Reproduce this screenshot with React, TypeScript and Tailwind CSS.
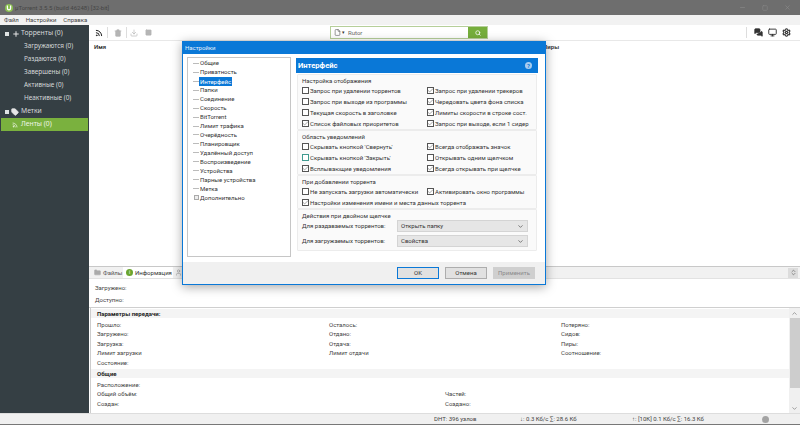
import React from "react";
import { Rss, Trash2, Download, Square, Search, File, Check, ChevronDown, MessagesSquare, Monitor, Settings, Tag, Plus, Folder, Minus, X, User, ChevronUp, ChevronsUpDown } from "lucide-react";

function Cb({ label, on, teal }: { label: string; on?: boolean; teal?: boolean }) {
  return (
    <div className="flex items-center gap-[1.5px] h-[11px] whitespace-nowrap">
      <span className={`w-[6.5px] h-[6.5px] border-[0.75px] ${teal ? "border-[#3f9a8f]" : "border-[#555]"} bg-white flex items-center justify-center shrink-0`}>
        {on && <Check size={7} strokeWidth={1.5} className="text-[#333] shrink-0" />}
      </span>
      <span className="text-[6px] leading-none text-[#333]">{label}</span>
    </div>
  );
}

function Group({ title, children }: { title: string; children: React.ReactNode }) {
  return (
    <div className="border border-[#ececec] rounded-[1px] pl-[4px] pr-[3px] pt-[1px] bg-[#fafafa]">
      <div className="text-[6px] leading-[9px] text-[#333]">{title}</div>
      {children}
    </div>
  );
}

function Row2({ a, b, aOn, bOn, teal }: { a: string; b: string; aOn?: boolean; bOn?: boolean; teal?: boolean }) {
  return (
    <div className="grid grid-cols-[125px_1fr]">
      <Cb label={a} on={aOn} teal={teal} />
      <Cb label={b} on={bOn} />
    </div>
  );
}

const tree = ["Общие","Приватность","Интерфейс","Папки","Соединение","Скорость","BitTorrent","Лимит трафика","Очерёдность","Планировщик","Удалённый доступ","Воспроизведение","Устройства","Парные устройства","Метка","Дополнительно"];

export default function App() {
  return (
    <div className="font-['Roboto','Noto_Sans',sans-serif] relative w-[800px] h-[425px] overflow-hidden bg-white flex flex-col text-[#333]">
      {/* title bar */}
      <div className="h-[15px] bg-[#6e6e6e] flex items-center pl-[5px] shrink-0">
        <svg width="8" height="8" viewBox="0 0 10 10"><circle cx="5" cy="5" r="5" fill="#8cc152"/><path d="M3 2v3.4a2 2 0 0 0 4 0V2" stroke="#fff" strokeWidth="1.5" fill="none"/></svg>
        <span className="ml-[2px] text-[6px] text-[#454545]">µTorrent 3.5.5 (build 46248) [32-bit]</span>
        <div className="ml-auto flex items-center gap-[16px] pr-[9px] text-[#8c8c8c]">
          <Minus size={7} />
          <Square size={6} />
          <X size={7} />
        </div>
      </div>
      {/* menu */}
      <div className="h-[10px] bg-[#f2f2f2] flex items-center pl-[4px] gap-[7px] text-[6px] leading-none text-[#444] shrink-0">
        <span>Файл</span><span>Настройки</span><span>Справка</span>
      </div>
      <div className="flex flex-1 min-h-0">
        {/* sidebar */}
        <aside className="w-[89px] bg-[#353f44] shrink-0 pt-[2px] text-[#d5d9da] text-[6.4px] leading-none font-['Noto_Sans',sans-serif]">
          <div className="h-[13px] flex items-center pl-[5px] text-[6.8px]">
            <span className="w-[4px] h-[4px] bg-[#dfe3e4]" />
            <Plus size={8} strokeWidth={3} className="text-[#e6e6e6] ml-[3px]" />
            <span className="ml-[1px]">Торренты (0)</span>
          </div>
          {["Загружаются (0)","Раздаются (0)","Завершены (0)","Активные (0)","Неактивные (0)"].map((t) => (
            <div key={t} className="h-[13px] flex items-center pl-[24px]">{t}</div>
          ))}
          <div className="h-[13px] flex items-center pl-[5px] text-[6.8px]">
            <span className="w-[4px] h-[4px] bg-[#dfe3e4]" />
            <Tag size={8} fill="#e6e6e6" className="text-[#e6e6e6] ml-[2px]" />
            <span className="ml-[2px]">Метки</span>
          </div>
          <div className="h-[13px] ml-[1px] mr-[1px] flex items-center pl-[11px] gap-[3px] bg-[#7ab13e] text-[#eef5e6] text-[6.8px]">
            <Rss size={6} strokeWidth={3} />
            <span>Ленты (0)</span>
          </div>
        </aside>
        <main className="flex-1 min-w-0 flex flex-col">
          {/* toolbar */}
          <div className="h-[16px] shrink-0 flex items-center pl-[6px] pr-[9px] bg-white border-b border-[#e8e8e8]">
            <Rss size={8} strokeWidth={3} className="text-[#222]" />
            <span className="w-px h-[11px] bg-[#ddd] ml-[4px] mr-[6px]" />
            <Trash2 size={8} className="text-[#b5b5b5]" fill="#b5b5b5" />
            <span className="w-px h-[11px] bg-[#ddd] ml-[4px] mr-[3px]" />
            <Download size={8} className="text-[#b5b5b5]" />
            <Square size={7} fill="#b5b5b5" className="text-[#b5b5b5] ml-[7px]" />
            <div className="ml-[178px] w-[158px] h-[13px] flex items-stretch border border-[#b6cf9a]">
              <div className="flex-1 flex items-center pl-[3px] gap-[1px] bg-white">
                <File size={7} className="text-[#555]" />
                <span className="text-[5px] leading-none">▾</span>
                <span className="ml-[2px] text-[6px] text-[#666]">Rutor</span>
              </div>
              <div className="w-[19px] bg-[#76ae3c] flex items-center justify-center">
                <Search size={6} strokeWidth={3} className="text-white" />
              </div>
            </div>
            <div className="ml-auto flex items-center gap-[5px]">
              <span className="w-px h-[11px] bg-[#ddd] mr-[2px]" />
              <MessagesSquare size={9} fill="#333" className="text-[#333]" />
              <Monitor size={9} strokeWidth={2.5} className="text-[#333]" />
              <Settings size={9} strokeWidth={3} className="text-[#333]" />
            </div>
          </div>
          {/* list */}
          <div className="h-[226px] shrink-0 bg-white pl-[5px] pt-[1px] text-[6px] font-semibold text-[#333] border-b border-[#c8c8c8] flex">
            <span>Имя</span>
            <span className="ml-[437px]">Пиры</span>
          </div>
          {/* tabs */}
          <div className="h-[12px] shrink-0 flex items-stretch bg-[#f1f1f1] border-b border-[#e2e2e2] pl-[4px] text-[6px] leading-none">
            <div className="w-[30px] flex items-center gap-[2px] pl-[1px] text-[#555]"><Folder size={7} fill="#aaa" className="text-[#aaa]" />Файлы</div>
            <div className="w-[50px] pl-[3px] flex items-center gap-[2px] bg-white text-[#333]">
              <span className="w-[7px] h-[7px] rounded-full bg-[#6aa52f] text-white text-[5px] flex items-center justify-center">i</span>Информация
            </div>
            <User size={7} className="text-[#999] ml-[2px] self-center" />
            <div className="ml-auto mr-[2px] self-center w-[10px] h-[10px] bg-[#dcdcdc] flex items-center justify-center text-[#555]">
              <ChevronsUpDown size={7} />
            </div>
          </div>
          {/* availability */}
          <div className="h-[29px] shrink-0 pl-[6px] text-[6px] text-[#444] flex flex-col border-b border-[#cfcfcf]">
            <div className="h-[12px] mt-[3px] leading-[12px]">Загружено:</div>
            <div className="h-[12px] leading-[12px]">Доступно:</div>
          </div>
          {/* details */}
          <div className="flex-1 min-h-0 border-l border-[#ccc] ml-[1px] flex text-[6px] text-[#444]">
            <div className="flex-1 min-w-0">
              <div className="h-[9px] bg-[#f4f4f4] pl-[6px] leading-[9px] font-bold text-[#222] mt-[1px]">Параметры передачи:</div>
              <div className="grid grid-cols-[232px_232px_1fr] pl-[6px] pt-[2px]">
                {[
                  ["Прошло:","Осталось:","Потеряно:"],
                  ["Загружено:","Отдано:","Сидов:"],
                  ["Загрузка:","Отдача:","Пиры:"],
                  ["Лимит загрузки","Лимит отдачи","Соотношение:"],
                  ["Состояние:","",""],
                ].flat().map((t, i) => <div key={i} className="h-[9.4px] leading-[9.4px] whitespace-nowrap">{t}</div>)}
              </div>
              <div className="h-[9px] bg-[#f4f4f4] pl-[6px] leading-[9px] font-bold text-[#222] mt-[2px]">Общие</div>
              <div className="grid grid-cols-[348px_1fr] pl-[6px] pt-[2px]">
                {[["Расположение:",""],["Общий объём:","Частей:"],["Создан:","Создано:"]].flat().map((t, i) => <div key={i} className="h-[9.4px] leading-[9.4px] whitespace-nowrap">{t}</div>)}
              </div>
            </div>
            <div className="w-[11px] shrink-0 bg-[#f0f0f0] flex flex-col items-center text-[#666]">
              <ChevronUp size={7} className="mt-[2px]" />
              <div className="w-[10px] h-[70px] bg-[#cdcdcd] mt-[1px]" />
              <ChevronDown size={7} className="mt-auto mb-[1px]" />
            </div>
          </div>
        </main>
      </div>
      {/* status */}
      <div className="h-[12px] shrink-0 bg-[#f0f0f0] border-t border-[#ddd] border-b-[#777] border-b flex items-center text-[6px] leading-none text-[#444] whitespace-nowrap">
        <span className="ml-[434px] w-[86px]">DHT: 396 узлов</span>
        <span className="w-[112px]">↓: 0.3 Кб/с ∑: 28.6 Кб</span>
        <span className="w-[130px]">↑: [10К] 0.1 Кб/с ∑: 16.3 Кб</span>
        <span className="w-[7px] h-[7px] rounded-full bg-[#a3a3a3]" />
      </div>

      {/* dialog */}
      <div className="absolute left-[182px] top-[41px] w-[364px] h-[244px] bg-[#f0f0f0] border border-[#0a78d7] shadow-[0_2px_10px_rgba(0,0,0,0.35)] flex flex-col">
        <div className="h-[12px] shrink-0 bg-[#0a78d7] text-[#e6f1fb] text-[6px] leading-[12px] pl-[2px]">Настройки</div>
        <div className="h-[208px] shrink-0 flex bg-white pt-[3px] pl-[4px] pr-[7px]">
          <div className="w-[104px] h-[200px] shrink-0 border border-[#c6c6c6] bg-white pt-[1px] pl-[5px] text-[6px] text-[#333]">
            {tree.map((t) => (
              <div key={t} className="h-[8.95px] flex items-center whitespace-nowrap">
                {t === "Дополнительно"
                  ? <span className="w-[5px] h-[5px] border-[0.75px] border-[#aaa] bg-[#eee] ml-[1px] mr-[1px]" />
                  : <span className="w-[6px] h-px bg-[#bbb] mr-[1px]" />}
                <span className={t === "Интерфейс" ? "bg-[#0a78d7] text-white px-[1px] ml-[-1px] leading-[9px]" : "leading-none"}>{t}</span>
              </div>
            ))}
          </div>
          <div className="flex-1 ml-[5px] min-w-0 mt-[1px]">
            <div className="h-[15px] bg-[#0a78d7] flex items-center pl-[2px] pr-[6px] text-white text-[7.6px] font-bold">
              <span>Интерфейс</span>
              <span className="ml-auto w-[7px] h-[7px] rounded-full bg-[#a9cdef] text-[#0a78d7] text-[6px] flex items-center justify-center">?</span>
            </div>
            <div className="mt-[1px] mx-[1px] flex flex-col">
              <Group title="Настройка отображения">
                <Row2 a="Запрос при удалении торрентов" b="Запрос при удалении трекеров" bOn />
                <Row2 a="Запрос при выходе из программы" b="Чередовать цвета фона списка" bOn />
                <Row2 a="Текущая скорость в заголовке" b="Лимиты скорости в строке сост." bOn />
                <Row2 a="Список файловых приоритетов" aOn b="Запрос при выходе, если 1 сидер" bOn />
              </Group>
              <Group title="Область уведомлений">
                <Row2 a="Скрывать кнопкой 'Свернуть'" b="Всегда отображать значок" bOn />
                <Row2 a="Скрывать кнопкой 'Закрыть'" teal b="Открывать одним щелчком" />
                <Row2 a="Всплывающие уведомления" aOn b="Всегда открывать при щелчке" bOn />
              </Group>
              <Group title="При добавлении торрента">
                <Row2 a="Не запускать загрузки автоматически" b="Активировать окно программы" bOn />
                <Cb label="Настройки изменения имени и места данных торрента" on />
              </Group>
              <Group title="Действия при двойном щелчке">
                <div className="grid grid-cols-[95px_1fr] items-center gap-y-[3px] pr-[5px] pb-[3px]">
                  <span className="text-[6px] leading-none">Для раздаваемых торрентов:</span>
                  <div className="h-[12px] bg-[#e6e6e6] border border-[#d4d4d4] flex items-center justify-between px-[3px] text-[6px] leading-none">Открыть папку<ChevronDown size={7} /></div>
                  <span className="text-[6px] leading-none">Для загружаемых торрентов:</span>
                  <div className="h-[12px] bg-[#e6e6e6] border border-[#d4d4d4] flex items-center justify-between px-[3px] text-[6px] leading-none">Свойства<ChevronDown size={7} /></div>
                </div>
              </Group>
            </div>
          </div>
        </div>
        <div className="flex-1 flex pt-[5px] justify-end gap-[6px] pr-[10px] text-[6px] leading-none">
          <div className="w-[42px] h-[12px] bg-[#e1e1e1] border border-[#0a78d7] flex items-center justify-center">OK</div>
          <div className="w-[42px] h-[12px] bg-[#e1e1e1] border border-[#adadad] flex items-center justify-center">Отмена</div>
          <div className="w-[42px] h-[12px] bg-[#cfcfcf] border border-[#cfcfcf] text-[#8a8a8a] flex items-center justify-center">Применить</div>
        </div>
      </div>
    </div>
  );
}
